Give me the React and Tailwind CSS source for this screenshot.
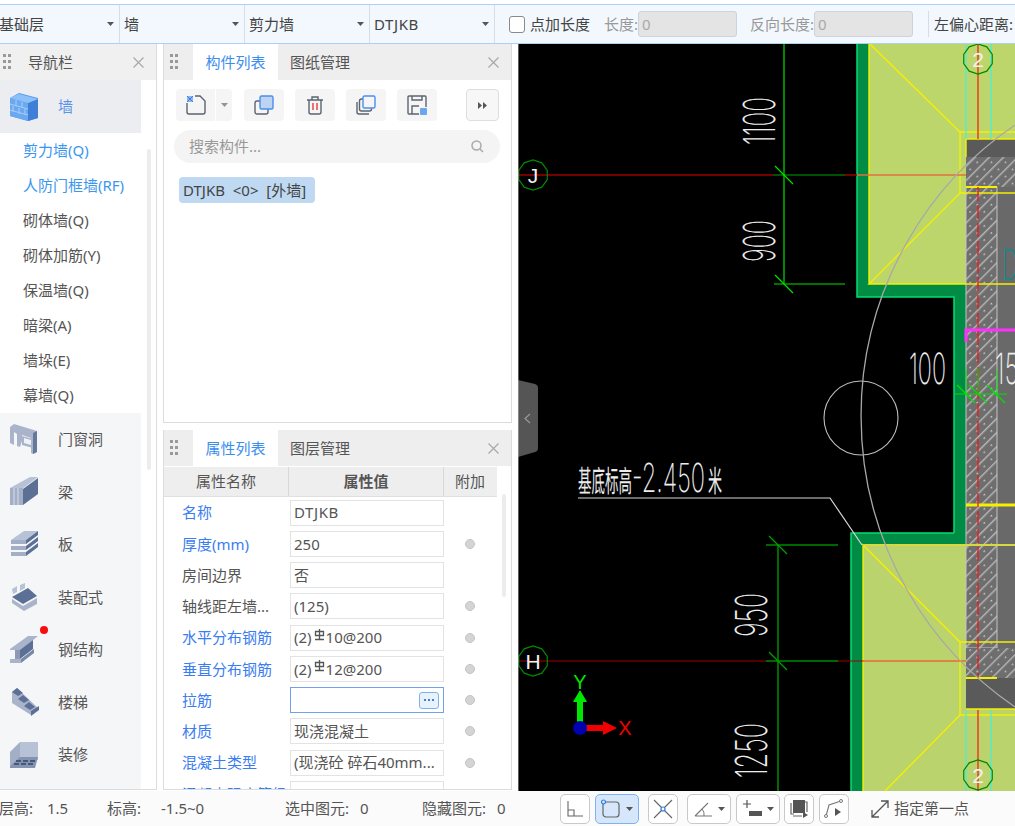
import React from "react";

const FONT = { fontFamily: '"Noto Sans", "Noto Sans CJK SC", sans-serif' };

// little caret used in combo boxes and tool buttons
const Caret = ({ className = "" }) => (
  <svg width="7" height="4" viewBox="0 0 7 4" className={className}>
    <path d="M0 0h7L3.5 4z" fill="#555" />
  </svg>
);

const Grip = () => (
  <svg width="8" height="18" viewBox="0 0 8 18">
    {[1, 7, 13].map((y) =>
      [0, 5].map((x) => <rect key={`${x}-${y}`} x={x} y={y} width="3" height="3" fill="#999" />)
    )}
  </svg>
);

const CloseX = () => (
  <svg width="11" height="11" viewBox="0 0 11 11">
    <path d="M.5.5l10 10M10.5.5l-10 10" stroke="#a8a8a8" strokeWidth="1.2" />
  </svg>
);

const Combo = ({ label, width, cut, latin }) => (
  <div
    className={`flex items-center justify-between border-r border-[#d5dde5] h-full pl-1 pr-[5px] ${width} ${cut ? "-ml-[5px]" : ""}`}
  >
    <span className={`text-[15px] text-[#444] ${latin ? "tracking-[0.6px]" : ""}`}>{label}</span>
    <Caret />
  </div>
);

// navigation icons, all in a 30x30 box
const WallIcon = () => (
  <svg width="30" height="30" viewBox="0 0 30 30">
    <path d="M1 6 10 1l19 5v20l-10 3L1 24z" fill="#5a9bee" />
    <path d="M1 6l18 5v18L1 24z" fill="#6aa8f2" />
    <path d="M19 11l10-4v19l-10 3z" fill="#3f7fd8" />
    <path d="M1 6 10 2l19 5-10 4z" fill="#8cc0f8" />
    <path d="M1 12l18 5M1 18l18 5M7 8v6M13 10v6M4 14v6M10 16v6M16 17v6" stroke="#a9cdf6" strokeWidth="1" fill="none" />
  </svg>
);

const DoorIcon = () => (
  <svg width="30" height="30" viewBox="0 0 30 30">
    <path d="M1 3l4-3 23 7v21l-4 2-2-1V14l-9-3v6l-2 6-3-1V10L5 8v13l-4-2z" fill="#a9b4cb" />
    <path d="M13 12l11 3v9l-11-3z" fill="#a9b4cb" />
    <path d="M15 14l7 2v5l-7-2z" fill="#eef1f6" />
    <path d="M24 9l4-2v21l-4 2z" fill="#66799c" />
  </svg>
);

const BeamIcon = () => (
  <svg width="30" height="30" viewBox="0 0 30 30">
    <path d="M1 11 21 0h8L13 12z" fill="#b8c2d6" />
    <path d="M1 11h13v17H1z" fill="#a3afc7" />
    <path d="M5 11v17M9 11v17" stroke="#d9dfea" strokeWidth="1" />
    <path d="M14 12 29 1v16L14 28z" fill="#5c7096" />
  </svg>
);

const SlabIcon = () => (
  <svg width="30" height="30" viewBox="0 0 30 30">
    <path d="M2 11 15 2h14L17 11z" fill="#b8c2d6" />
    <path d="M2 11h15v4H2zM2 17h15v4H2zM2 23h15v4H2z" fill="#a3afc7" />
    <path d="M17 11 29 2v4L17 15zM17 17l12-9v4L17 21zM17 23l12-9v4L17 27z" fill="#5c7096" />
  </svg>
);

const PrefabIcon = () => (
  <svg width="30" height="30" viewBox="0 0 30 30">
    <path d="M3 7l5-3v6l-4 2zM11 3l5-2v5l-5 3z" fill="#b8c2d6" />
    <path d="M3 15 19 6l9 8-14 8z" fill="#5c7096" />
    <path d="M3 17l11 7 14-8v6l-13 7-12-8z" fill="#a9b4cb" />
  </svg>
);

const SteelIcon = () => (
  <svg width="30" height="30" viewBox="0 0 30 30">
    <path d="M1 15 19 2h10L12 16H1z" fill="#a9b4cb" />
    <path d="M6 16h5v9H6z" fill="#8c9ab5" />
    <path d="M11 16 24 6v9L11 25z" fill="#5c7096" />
    <path d="M1 25h11v4H1z" fill="#a9b4cb" />
    <path d="M12 25l13-10v4L12 29z" fill="#7688a8" />
  </svg>
);

const StairIcon = () => (
  <svg width="30" height="30" viewBox="0 0 30 30">
    <path d="M3 5l5-4 22 21-8 6L3 16z" fill="#a9b4cb" />
    <path d="M8 1l6 5-5 3-6-4zM14 8l6 5-5 3-6-4zM20 15l6 5-5 3-6-4z" fill="#5c7096" />
    <path d="M22 24l8-5v4l-8 6z" fill="#5c7096" />
  </svg>
);

const FinishIcon = () => (
  <svg width="30" height="30" viewBox="0 0 30 30">
    <path d="M11 3h18v18H11z" fill="#b8c2d6" />
    <path d="M1 13 11 3v18L1 27z" fill="#a3afc7" />
    <path d="M1 27 11 18h18l-3 11H1z" fill="#8493b0" />
    <path d="M7 21h5v2H7zM14 21h5v2h-5zM21 21h5v2h-5zM5 24h5v2H5zM12 24h5v2h-5zM19 24h5v2h-5z" fill="#44577c" />
  </svg>
);

const subItems = [
  ["剪力墙(Q)", true],
  ["人防门框墙(RF)", true],
  ["砌体墙(Q)", false],
  ["砌体加筋(Y)", false],
  ["保温墙(Q)", false],
  ["暗梁(A)", false],
  ["墙垛(E)", false],
  ["幕墙(Q)", false],
];

const navItems = [
  ["门窗洞", DoorIcon],
  ["梁", BeamIcon],
  ["板", SlabIcon],
  ["装配式", PrefabIcon],
  ["钢结构", SteelIcon, true],
  ["楼梯", StairIcon],
  ["装修", FinishIcon],
];

const NavPanel = () => (
  <div className="relative w-[157px] h-[746px] shrink-0 bg-white border-r border-b border-[#dcdcdc] flex flex-col overflow-hidden">
    <div className="flex items-center h-[36px] bg-[#f0f0f0] pl-[3px] pr-[12px] shrink-0">
      <Grip />
      <span className="ml-[17px] text-[15px] text-[#555] flex-1">导航栏</span>
      <CloseX />
    </div>
    <div className="w-[141px] flex flex-col">
      <div className="flex items-center h-[53px] bg-[#ebedf1] pl-[9px]">
        <WallIcon />
        <span className="ml-[19px] text-[15px] text-[#5b93ec]">墙</span>
      </div>
      <div className="flex flex-col">
        {subItems.map(([label, on]) => (
          <div
            key={label}
            className={`h-[35px] pl-[23px] flex items-center text-[15px] ${on ? "text-[#3b97ee]" : "text-[#555]"}`}
          >
            {label}
          </div>
        ))}
      </div>
      <div className="flex flex-col bg-[#f5f6f8] pb-[9px]">
        {navItems.map(([label, Icon, dot]) => (
          <div key={label} className="relative h-[52.5px] flex items-center pl-[9px]">
            <Icon />
            <span className="ml-[19px] text-[15px] text-[#555]">{label}</span>
            {dot && <span className="absolute left-[40px] top-[3px] w-[8px] h-[8px] rounded-full bg-[#f60d0d]" />}
          </div>
        ))}
      </div>
    </div>
    <div className="absolute left-[147px] top-[105px] w-[4px] h-[321px] rounded bg-[#ececec]" />
  </div>
);

const PanelHeader = ({ active, other }) => (
  <div className="flex items-stretch h-[36px] bg-[#eeeeee] pl-[6px] pr-[12px] shrink-0">
    <div className="flex items-center w-[23px]">
      <Grip />
    </div>
    <div className="w-[85px] bg-white flex items-center justify-center text-[15px] text-[#3b8eee]">{active}</div>
    <div className="ml-[12px] flex items-center text-[15px] text-[#555] flex-1">{other}</div>
    <div className="flex items-center">
      <CloseX />
    </div>
  </div>
);

const ToolBtn = ({ children, className = "w-[40px]" }) => (
  <div className={`h-[32px] rounded bg-[#f5f5f5] flex items-center justify-center ${className}`}>{children}</div>
);

const ComponentPanel = () => (
  <div className="h-[379px] bg-white border border-t-0 border-[#dcdcdc] flex flex-col">
    <PanelHeader active="构件列表" other="图纸管理" />
    <div className="flex items-center pl-[12px] pr-[12px] mt-[9px]">
      <div className="w-[56px] h-[32px] rounded bg-[#f5f5f5] flex items-center">
        <div className="w-[40px] flex justify-center border-r border-[#ffffff] h-full items-center">
          <svg width="20" height="20" viewBox="0 0 20 20">
            <path d="M1 8v9a2 2 0 0 0 2 2h14a2 2 0 0 0 2-2V6l-5-5H9" fill="none" stroke="#5c6470" strokeWidth="1.4" />
            <path d="M1 1h6v6H1z" fill="#8db4ef" />
            <path d="M1 1l6 6M7 1l-6 6" stroke="#3f7fd8" strokeWidth="1" />
          </svg>
        </div>
        <Caret className="ml-[5px] opacity-60" />
      </div>
      <ToolBtn className="w-[40px] ml-[12px]">
        <svg width="20" height="20" viewBox="0 0 20 20">
          <rect x="1" y="6" width="13" height="13" rx="2" fill="none" stroke="#5c6470" strokeWidth="1.4" />
          <rect x="6" y="1" width="13" height="13" rx="1.5" fill="#bcd3f2" stroke="#4a8ff0" strokeWidth="1.4" />
        </svg>
      </ToolBtn>
      <ToolBtn className="w-[40px] ml-[11px]">
        <svg width="18" height="20" viewBox="0 0 18 20">
          <path d="M1 5h16M6 5V2h6v3M3 5v12a2 2 0 0 0 2 2h8a2 2 0 0 0 2-2V5" fill="none" stroke="#5c6470" strokeWidth="1.4" />
          <path d="M7 8v7M11 8v7" stroke="#e25555" strokeWidth="1.6" />
        </svg>
      </ToolBtn>
      <ToolBtn className="w-[40px] ml-[11px]">
        <svg width="20" height="20" viewBox="0 0 20 20">
          <path d="M1 7v10a2 2 0 0 0 2 2h10" fill="none" stroke="#5c6470" strokeWidth="1.4" />
          <rect x="3.5" y="4" width="12" height="12" rx="2" fill="none" stroke="#5c6470" strokeWidth="1.4" />
          <rect x="7" y="1" width="12" height="12" rx="1.5" fill="#f5f5f5" stroke="#4a8ff0" strokeWidth="1.4" />
        </svg>
      </ToolBtn>
      <ToolBtn className="w-[40px] ml-[11px]">
        <svg width="20" height="20" viewBox="0 0 20 20">
          <path d="M12 19H2a1 1 0 0 1-1-1V2a1 1 0 0 1 1-1h16a1 1 0 0 1 1 1v10" fill="none" stroke="#5c6470" strokeWidth="1.4" />
          <path d="M5 19V11h7M5 1v4h10V1" fill="none" stroke="#5c6470" strokeWidth="1.4" />
          <rect x="13" y="13" width="7" height="7" rx="1" fill="#6aa5ee" />
        </svg>
      </ToolBtn>
      <div className="ml-[29px] w-[33px] h-[32px] rounded border border-[#dedede] bg-[#f7f7f7] flex items-center justify-center">
        <svg width="9" height="7" viewBox="0 0 9 7">
          <path d="M0 0l4 3.5L0 7zM5 0l4 3.5L5 7z" fill="#555" />
        </svg>
      </div>
    </div>
    <div className="ml-[10px] mr-[11px] mt-[9px] h-[33px] rounded-full bg-[#f4f4f4] flex items-center justify-between pl-[15px] pr-[16px]">
      <span className="text-[15px] text-[#999]">搜索构件...</span>
      <svg width="13" height="13" viewBox="0 0 13 13">
        <circle cx="5.5" cy="5.5" r="4.5" fill="none" stroke="#aaa" strokeWidth="1.5" />
        <path d="M9 9l3 3" stroke="#aaa" strokeWidth="1.5" />
      </svg>
    </div>
    <div className="pl-[15px] mt-[14px]">
      <div className="flex items-center h-[26px] w-[136px] rounded bg-[#bfd9f2] pl-[4px] text-[15px] text-[#444]">
        <span className="whitespace-pre">{"DTJKB  <0>  [外墙]"}</span>
      </div>
    </div>
  </div>
);

const rows = [
  ["名称", true, "DTJKB", false],
  ["厚度(mm)", true, "250", true],
  ["房间边界", false, "否", false],
  ["轴线距左墙...", false, "(125)", true],
  ["水平分布钢筋", true, "10@200", true, true],
  ["垂直分布钢筋", true, "12@200", true, true],
  ["拉筋", true, "", true],
  ["材质", true, "现浇混凝土", true],
  ["混凝土类型", true, "(现浇砼 碎石40mm...", true],
  ["混凝土强度等级", true, "", false],
];

// the rebar grade glyph is not in the fonts, so it is a small drawing
const RebarMark = () => (
  <svg width="11" height="13" viewBox="0 0 11 13" className="ml-[2px] mr-[1px] -mt-[4px]">
    <path d="M1.5 2.5h8v4h-8zM5.5 0v10M1 10.5h9" stroke="#555" strokeWidth="1.3" fill="none" />
  </svg>
);

const PropRow = ({ label, blue, value, dot, rebar, index }) => (
  <div className="flex items-center h-[31.25px] shrink-0">
    <div className={`w-[126px] pl-[18px] text-[15px] ${blue ? "text-[#3a7df0]" : "text-[#555]"}`}>{label}</div>
    {index === 6 ? (
      <div className="w-[154px] h-[26px] border border-[#6fa2ea] flex items-center justify-end pr-[4px]">
        <div className="w-[20px] h-[17px] rounded-[3px] border border-[#7db3ee] bg-[#e8f2fc] flex items-center justify-center gap-[2px]">
          <span className="w-[2px] h-[2px] bg-[#3f7fd8]" />
          <span className="w-[2px] h-[2px] bg-[#3f7fd8]" />
          <span className="w-[2px] h-[2px] bg-[#3f7fd8]" />
        </div>
      </div>
    ) : (
      <div className="w-[154px] h-[26px] border border-[#e3e3e3] flex items-center pl-[3px] text-[15px] text-[#555] whitespace-pre">
        {rebar ? (
          <>
            (2)
            <RebarMark />
            {value}
          </>
        ) : value === "DTJKB" ? (
          <span className="tracking-[0.6px]">{value}</span>
        ) : (
          value
        )}
      </div>
    )}
    {dot && <span className="ml-[21px] w-[10px] h-[10px] rounded-full bg-[#d4d4d4] border border-[#c4c4c4]" />}
  </div>
);

const PropertyPanel = () => (
  <div className="relative h-[360px] bg-white border border-t-0 border-[#dcdcdc] flex flex-col overflow-hidden">
    <PanelHeader active="属性列表" other="图层管理" />
    <div className="flex h-[30px] w-[333px] bg-[#eeeeee] border-b border-[#e0e0e0] text-[15px] text-[#555] mt-[1px] shrink-0">
      <div className="w-[125px] flex items-center justify-center border-r border-[#d8d8d8]">属性名称</div>
      <div className="w-[155px] flex items-center justify-center border-r border-[#d8d8d8] font-bold">属性值</div>
      <div className="w-[52px] flex items-center justify-center">附加</div>
    </div>
    <div className="flex flex-col">
      {rows.map(([label, blue, value, dot, rebar], i) => (
        <PropRow key={label} label={label} blue={blue} value={value} dot={dot} rebar={rebar} index={i} />
      ))}
    </div>
    <div className="absolute left-[338px] top-[64px] w-[4px] h-[103px] rounded bg-[#ececec]" />
  </div>
);

// CAD text is squeezed and thin, so each label gets a fixed length
const CadText = ({ x, y, len, size, rotate, children, fill = "#ececec", family = "Inter", weight = 200 }) => (
  <text
    x={x}
    y={y}
    fontSize={size}
    fill={fill}
    textLength={len}
    lengthAdjust="spacingAndGlyphs"
    textRendering="geometricPrecision"
    fontFamily={`${family}, "Noto Sans CJK SC", sans-serif`}
    fontWeight={weight}
    transform={rotate ? `rotate(-90 ${x} ${y})` : undefined}
  >
    {children}
  </text>
);

const Tick = ({ x, y, color = "#00e000" }) => (
  <path d={`M${x - 9} ${y - 9}L${x + 9} ${y + 9}`} stroke={color} strokeWidth="1.3" />
);

const AxisBubble = ({ cx, cy, label, color = "#008a00" }) => {
  const pts = Array.from({ length: 10 }, (_, i) => {
    const a = (i * Math.PI) / 5 + Math.PI / 10;
    return `${cx + 15 * Math.cos(a)},${cy + 15 * Math.sin(a)}`;
  }).join(" ");
  return (
    <>
      <polygon points={pts} fill="none" stroke={color} strokeWidth="1.2" />
      <text
        x={cx}
        y={cy + 8}
        fontSize="21"
        fill="#f2f2f2"
        textAnchor="middle"
        fontFamily='"Liberation Sans", sans-serif'
      >
        {label}
      </text>
    </>
  );
};

const CadCanvas = () => (
  <svg width="497" height="747" viewBox="518 44 497 747" className="block shrink-0" shapeRendering="geometricPrecision">
    <defs>
      <pattern id="hatch" width="10" height="10" patternUnits="userSpaceOnUse" patternTransform="rotate(45)">
        <rect width="10" height="10" fill="#6e6e6e" />
        <rect x="0" width="1.4" height="10" fill="#b8b8b8" />
        <rect x="5" y="3" width="1.5" height="1.5" fill="#d0d0d0" />
      </pattern>
    </defs>
    <rect x="518" y="44" width="497" height="747" fill="#000" />

    {/* upper footing */}
    <path d="M857 44H1015V297H966V545H954V297H857z" fill="#008c44" />
    <path d="M857 44V297H954V533" fill="none" stroke="#00e070" strokeWidth="1.5" />
    <rect x="869" y="44" width="146" height="240" fill="#bdd66c" />
    {/* lower footing */}
    <path d="M851 791V533H954V545H1015V791z" fill="#008c44" />
    <path d="M851 791V533H954" fill="none" stroke="#00e070" strokeWidth="1.5" />
    <rect x="863" y="545" width="152" height="246" fill="#bbd36c" />

    {/* wall */}
    <rect x="997" y="187" width="18" height="461" fill="#696969" />
    <rect x="966" y="187" width="31" height="461" fill="url(#hatch)" stroke="#c4c4c4" strokeWidth="1" />
    <rect x="966" y="139" width="49" height="18" fill="#5a5a5a" />
    <rect x="966" y="157" width="49" height="30" fill="url(#hatch)" />
    <rect x="966" y="648" width="49" height="30" fill="url(#hatch)" />
    <rect x="966" y="678" width="49" height="31" fill="#5a5a5a" />

    {/* yellow outlines */}
    <g fill="none" stroke="#f4f000" strokeWidth="1.4">
      <path d="M870 44L960 132H1015M960 132V193H1015M960 193L869 284H1015M869 44V284" />
      <path d="M863 791V545L960 642H1015M960 642V715H1015M960 715L885 791" />
      <path d="M966 139H1015M966 139V157M966 709H1015" />
      <path d="M966 187H997M966 678H997" strokeWidth="2" />
    </g>
    <path d="M863 545H1015" stroke="#d8d840" strokeWidth="2" />
    <path d="M966 505H1015" stroke="#f4f000" strokeWidth="3" />
    <path d="M966 342V330H1015" fill="none" stroke="#ff30ff" strokeWidth="3" />

    {/* grid lines */}
    <path d="M966 44V139M991 44V139M966 710V791M991 710V791" stroke="#40f0e0" strokeWidth="1.2" />
    <path d="M978 44V139M978 710V791" stroke="#f02810" strokeWidth="1.3" />
    <path d="M978 187V678" stroke="#f01818" strokeWidth="1.3" strokeDasharray="14 4" />
    <path d="M518 175H773M845 175H857" stroke="#9c0000" strokeWidth="1.4" />
    <path d="M773 175H845" stroke="#006e00" strokeWidth="1.4" />
    <path d="M857 175H966" stroke="#e07040" strokeWidth="1.6" />
    <path d="M518 661H766M838 661H863" stroke="#a00000" strokeWidth="1.2" />
    <path d="M766 661H838" stroke="#008a00" strokeWidth="1.4" />
    <path d="M863 661H966" stroke="#e86a30" strokeWidth="1.3" />

    {/* dimensions */}
    <path d="M784 44V284M774 284H845" stroke="#00e000" strokeWidth="1.2" />
    <Tick x={784} y={175} />
    <Tick x={784} y={284} />
    <path d="M785 44l-9-9" stroke="#00e000" />
    <path d="M778 545V791" stroke="#00b000" strokeWidth="1.2" />
    <path d="M766 545H838" stroke="#008a00" strokeWidth="1.4" />
    <Tick x={778} y={545} color="#00a000" />
    <Tick x={778} y={661} color="#00a000" />
    <path d="M955 394H1007M966 394V370M978 394V368M997 394V370" stroke="#00e000" strokeWidth="1" />
    <Tick x={966} y={394} />
    <Tick x={978} y={394} />
    <Tick x={996} y={394} />

    {/* circles and leader */}
    <circle cx="861" cy="418" r="37" fill="none" stroke="#bdbdbd" strokeWidth="1.1" />
    <path d="M1015 125A352 352 0 0 0 1015 707" fill="none" stroke="#a8a8a8" strokeWidth="1.3" />
    <path d="M578 498H830L862 545" fill="none" stroke="#d8d8d8" strokeWidth="1.2" />
    <AxisBubble cx={978} cy={59} label="2" />
    <AxisBubble cx={978} cy={775} label="2" />
    <AxisBubble cx={533} cy={175} label="J" />
    <AxisBubble cx={533} cy={661} label="H" />

    {/* labels */}
    <CadText x={775} y={145} len={48} size={44} rotate>1100</CadText>
    <CadText x={775} y={262} len={42} size={44} rotate>900</CadText>
    <CadText x={767} y={637} len={44} size={44} rotate>950</CadText>
    <CadText x={767} y={778} len={55} size={44} rotate>1250</CadText>
    <CadText x={909} y={384} len={37} size={43}>100</CadText>
    <CadText x={995} y={384} len={24} size={43}>15</CadText>
    <CadText x={578} y={492} len={54} size={30} weight={400}>基底标高</CadText>
    <CadText x={632} y={492} len={73} size={40}>-2.450</CadText>
    <CadText x={708} y={492} len={14} size={30} weight={400}>米</CadText>
    <CadText x={1002} y={280} len={16} size={43} fill="#128a8a">D</CadText>

    {/* coordinate marker */}
    <path d="M577 722V702h-4l7-12 7 12h-4v20z" fill="#00e800" />
    <path d="M586 725h17v-4l14 7-14 7v-4h-17z" fill="#f00000" />
    <circle cx="580" cy="728" r="7" fill="#0000b0" />
    <text x="580" y="689" fontSize="20" fill="#00e800" textAnchor="middle" fontFamily='"Liberation Sans", sans-serif'>Y</text>
    <text x="625" y="735" fontSize="20" fill="#f00000" textAnchor="middle" fontFamily='"Liberation Sans", sans-serif'>X</text>

    {/* collapse handle */}
    <path d="M518 380l17 4q3 1 3 4v60q0 3-3 4l-17 5z" fill="#555" />
    <path d="M530 414l-5 4.5 5 4.5" fill="none" stroke="#999" strokeWidth="1.2" />
    <path d="M518 44V791" stroke="#bbb" strokeWidth="1" />
  </svg>
);

const StatusBtn = ({ w, active, caret, children }) => (
  <div
    className={`h-[30px] ${w} rounded-[5px] border flex items-center justify-center gap-[5px] ${
      active ? "border-[#7fb2ee] bg-[#d6e6fb]" : "border-[#c9c9c9] bg-white"
    }`}
  >
    {children}
    {caret && <Caret />}
  </div>
);

const StatusBar = () => (
  <div className="flex items-center h-[35px] bg-[#fbfbfb] text-[15px] text-[#555] shrink-0 whitespace-pre">
    <span className="-ml-[16px] w-[63px]">楼层高:</span>
    <span className="w-[60px]">1.5</span>
    <span className="w-[54px]">标高:</span>
    <span className="w-[124px]">-1.5~0</span>
    <span className="w-[75px]">选中图元:</span>
    <span className="w-[62px]">0</span>
    <span className="w-[75px]">隐藏图元:</span>
    <span className="w-[63px]">0</span>
    <div className="flex items-center gap-[5px]">
      <StatusBtn w="w-[30px]">
        <svg width="18" height="18" viewBox="0 0 18 18">
          <path d="M2 1v15h15M2 10h6v6" fill="none" stroke="#666" strokeWidth="1.1" />
        </svg>
      </StatusBtn>
      <StatusBtn w="w-[44px]" active caret>
        <svg width="20" height="20" viewBox="0 0 20 20">
          <rect x="2" y="3" width="16" height="15" rx="3" fill="none" stroke="#666" strokeWidth="1.2" />
          <circle cx="2.5" cy="3" r="2" fill="#d6e6fb" stroke="#2a7de1" strokeWidth="1.2" />
        </svg>
      </StatusBtn>
      <div className="ml-[4px]">
        <StatusBtn w="w-[30px]">
          <svg width="22" height="22" viewBox="0 0 22 22">
            <path d="M2 2l18 18M20 2L2 20" stroke="#666" strokeWidth="1.1" />
            <circle cx="11" cy="11" r="2" fill="#fff" stroke="#2a7de1" strokeWidth="1.2" />
          </svg>
        </StatusBtn>
      </div>
      <div className="ml-[4px]">
        <StatusBtn w="w-[44px]" caret>
          <svg width="20" height="18" viewBox="0 0 20 18">
            <path d="M2 16H19M2 16L15 3" fill="none" stroke="#777" strokeWidth="1.1" />
            <path d="M9 9a8 8 0 0 1 2 7" fill="none" stroke="#777" />
          </svg>
        </StatusBtn>
      </div>
      <StatusBtn w="w-[44px]" caret>
        <svg width="20" height="18" viewBox="0 0 20 18">
          <path d="M1 4h8M5 0v8" stroke="#555" strokeWidth="1.2" />
          <rect x="7" y="11" width="13" height="5" fill="#555" />
        </svg>
      </StatusBtn>
      <div className="-ml-[1px]">
        <StatusBtn w="w-[30px]">
          <svg width="20" height="20" viewBox="0 0 20 20">
            <rect x="4" y="1" width="12" height="13" fill="#555" />
            <path d="M2 4v11h3M4 17h9M16 3h2v10" fill="none" stroke="#666" strokeWidth="1.2" />
            <path d="M14 13l5 3-5 3z" fill="#555" />
          </svg>
        </StatusBtn>
      </div>
      <StatusBtn w="w-[30px]">
        <svg width="20" height="20" viewBox="0 0 20 20">
          <path d="M2 17L5 6l12-4" fill="none" stroke="#777" strokeWidth="1.1" />
          <circle cx="2" cy="17" r="1.5" fill="#fff" stroke="#777" />
          <circle cx="17" cy="2" r="1.5" fill="#fff" stroke="#777" />
          <path d="M11 9l6 4-6 4z" fill="#555" />
        </svg>
      </StatusBtn>
    </div>
    <svg width="20" height="20" viewBox="0 0 20 20" className="ml-[21px]">
      <path d="M2 18L18 2M11 2h7v7M2 11v7h7" fill="none" stroke="#555" strokeWidth="1.3" />
    </svg>
    <span className="ml-[4px]">指定第一点</span>
  </div>
);

export default function App() {
  return (
    <div className="w-[1015px] h-[826px] overflow-hidden bg-white flex flex-col" style={FONT}>
      <div className="h-[4px] shrink-0" />
      <div className="flex items-center h-[40px] shrink-0 bg-[#f2f8fd] border-y border-[#a9d2f7] whitespace-nowrap overflow-hidden">
        <Combo label="基础层" width="w-[125px]" cut />
        <Combo label="墙" width="w-[125px]" />
        <Combo label="剪力墙" width="w-[125px]" />
        <Combo label="DTJKB" width="w-[125px]" latin />
        <div className="w-[14px] shrink-0" />
        <span className="w-[16px] h-[17px] rounded-[3px] border border-[#8a8a8a] bg-white shrink-0" />
        <span className="ml-[5px] text-[15px] text-[#444]">点加长度</span>
        <span className="ml-[14px] text-[15px] text-[#999]">长度:</span>
        <div className="w-[99px] h-[26px] rounded-[3px] bg-[#e4e4e4] border border-[#ccd3dc] pl-[3px] flex items-center text-[15px] text-[#aaa] shrink-0">0</div>
        <span className="ml-[13px] text-[15px] text-[#999]">反向长度:</span>
        <div className="w-[99px] h-[26px] rounded-[3px] bg-[#e4e4e4] border border-[#ccd3dc] pl-[3px] flex items-center text-[15px] text-[#aaa] shrink-0">0</div>
        <div className="ml-[15px] w-px h-[26px] bg-[#d5dde5] shrink-0" />
        <span className="ml-[5px] text-[15px] text-[#444]">左偏心距离:</span>
      </div>
      <div className="flex h-[747px] shrink-0">
        <NavPanel />
        <div className="w-[349px] ml-[6px] flex flex-col gap-[7px] shrink-0">
          <ComponentPanel />
          <PropertyPanel />
        </div>
        <div className="ml-[6px]">
          <CadCanvas />
        </div>
      </div>
      <StatusBar />
    </div>
  );
}
